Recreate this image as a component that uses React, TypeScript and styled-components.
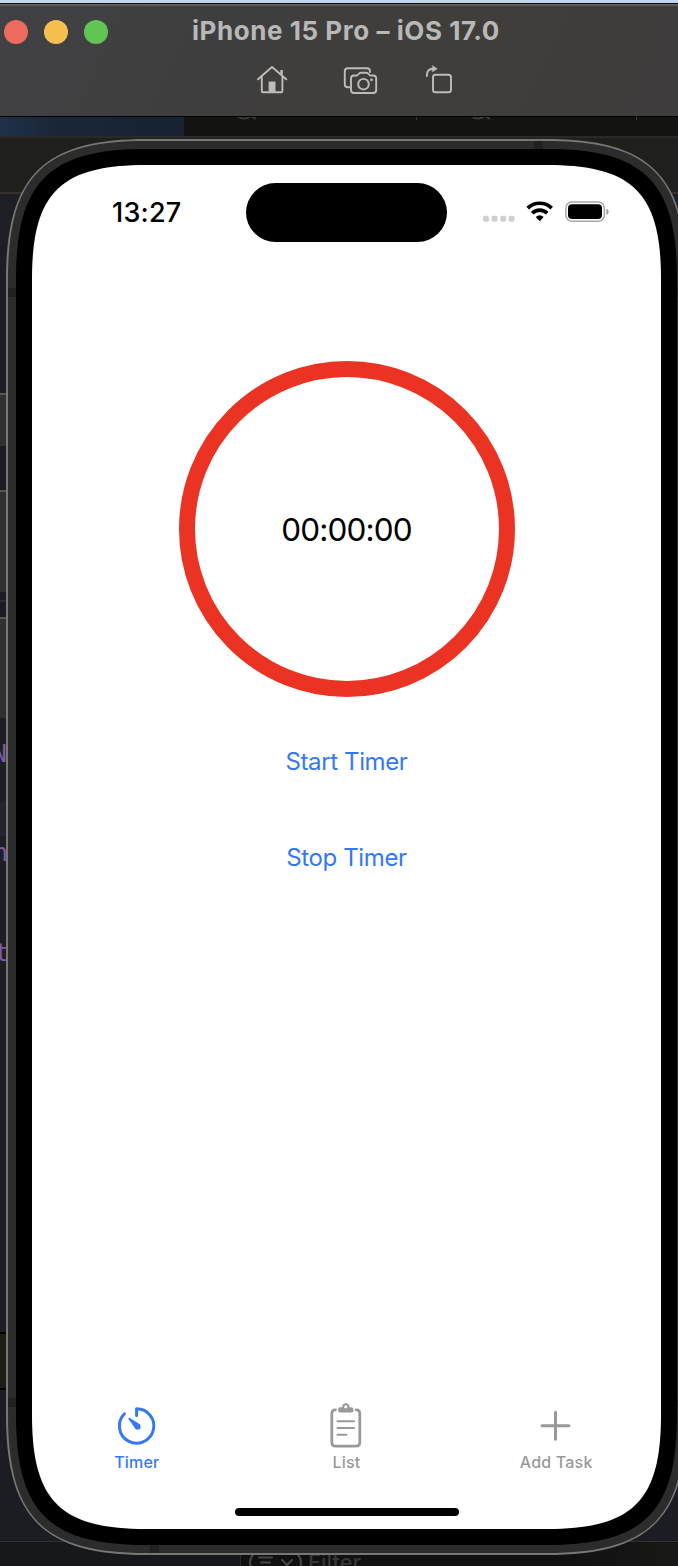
import React from 'react';
import styled, { createGlobalStyle } from 'styled-components';

const GlobalStyle = createGlobalStyle`
  * { box-sizing: border-box; }
  body { margin: 0; background: #1e1f25; }
`;

const font = `Inter, 'Liberation Sans', sans-serif`;

/* Smooth-cornered rectangle: each corner eases in over `l` px and cuts the diagonal at `m` px. */
const smooth = (w: number, h: number, l: number, m: number) => {
  const c = (8 * m - l) / 3;
  return `path('M${l} 0 L${w - l} 0 C${w - c} 0 ${w} ${c} ${w} ${l} L${w} ${h - l} C${w} ${h - c} ${w - c} ${h} ${w - l} ${h} L${l} ${h} C${c} ${h} 0 ${h - c} 0 ${h - l} L0 ${l} C0 ${c} ${c} 0 ${l} 0 Z')`;
};

const Page = styled.div`
  display: grid;
  grid-template: 1566px / 678px;
  width: 678px;
  height: 1566px;
  overflow: hidden;
  font-family: ${font};
  > * { grid-area: 1 / 1; }
`;

/* ---------- editor window behind the simulator ---------- */
const Editor = styled.div`
  display: flex;
  flex-direction: column;
  background: #1e1f25;
`;
const Band = styled.div<{ $h: number; $c: string }>`
  flex: none;
  height: ${p => p.$h}px;
  background: ${p => p.$c};
`;
const TabStrip = styled.div`
  display: flex;
  height: 19px;
  flex: none;
  background: #131311;
`;
const ActiveTab = styled.div`
  width: 184px;
  background: linear-gradient(90deg, #20304a, #1a2637 30%, #182230);
`;
const TabGlyphs = styled.svg`
  width: 494px;
  height: 19px;
`;
const Gutter = styled.div<{ $h: number; $c?: string }>`
  flex: none;
  height: ${p => p.$h}px;
  font-family: 'DejaVu Sans Mono', monospace;
  font-size: 24px;
  line-height: 34px;
  color: #7a5aa6;
  background: ${p => p.$c || '#1e1f25'};
`;
const CodeEdge = styled.div<{ $overhang?: number }>`
  width: ${p => 6 + (p.$overhang || 0)}px;
  height: 34px;
  display: flex;
  justify-content: flex-end;
`;
const Footer = styled.div`
  flex: 1;
  display: flex;
  background: #17181b;
`;
const FilterBar = styled.div`
  margin-left: 240px;
  flex: 1;
  padding: 8px 0 0 8px;
  display: flex;
  gap: 5px;
  color: #363636;
  font-size: 22px;
  font-weight: 500;
  line-height: 24px;
  border-left: 1px solid #292929;
  background: linear-gradient(90deg, #101010, #111 75%, #181817);
`;

/* ---------- simulator ---------- */
const Simulator = styled.div`
  display: flex;
  flex-direction: column;
  z-index: 1;
`;
const Desktop = styled.div`
  height: 4px;
  flex: none;
  background: #c3d6ea;
  border-bottom: 1px solid #101014;
`;
const TitleBar = styled.header`
  height: 113px;
  flex: none;
  border-top: 2px solid #5e5e5e;
  border-bottom: 1px solid #000;
  background: linear-gradient(115deg, #414144, #3f3e3e 35%, #403e3b 65%, #3e3c3c);
`;
const TitleRow = styled.div`
  display: grid;
  grid-template-columns: 192px 1fr;
  align-items: center;
  height: 52px;
`;
const Lights = styled.div`
  display: flex;
  gap: 16px;
  padding-left: 4px;
`;
const Light = styled.i<{ $c: string }>`
  width: 24px;
  height: 24px;
  border-radius: 50%;
  background: ${p => p.$c};
`;
const Title = styled.h1`
  margin: 0;
  padding-bottom: 3px;
  font-size: 26px;
  line-height: 32px;
  font-weight: 700;
  letter-spacing: 0.55px;
  color: #b9b8b8;
  white-space: nowrap;
`;
const Tools = styled.div`
  display: grid;
  grid-template-columns: 88px 80px 36px;
  padding: 4px 0 0 254px;
`;
const ToolIcon = styled.svg`
  width: 36px;
  height: 36px;
  fill: none;
  stroke: #bdbcba;
  stroke-width: 1.9;
  stroke-linejoin: round;
  stroke-linecap: round;
`;

const Highlight = styled.div`
  width: 681px;
  height: 1416px;
  flex: none;
  margin: 22px 0 0 6px;
  padding: 2px;
  background: #777;
  clip-path: ${smooth(681, 1416, 140, 31.5)};
`;
const Frame = styled.div`
  position: relative;
  width: 677px;
  height: 1412px;
  padding: 8px;
  background: #2c2c2c;
  clip-path: ${smooth(677, 1412, 138, 30.5)};
`;
const Antenna = styled.i<{ $x: number; $y: number }>`
  position: absolute;
  left: ${p => p.$x}px;
  top: ${p => p.$y}px;
  width: 9px;
  height: 9px;
  background: #212121;
`;
const Bezel = styled.div`
  width: 661px;
  height: 1396px;
  padding: 16px;
  background: #000;
  clip-path: ${smooth(661, 1396, 130, 28.6)};
`;
const Screen = styled.main`
  display: flex;
  flex-direction: column;
  align-items: center;
  width: 629px;
  height: 1364px;
  background: #fff;
  clip-path: ${smooth(629, 1364, 114, 24.8)};
`;
const StatusBar = styled.div`
  display: grid;
  grid-template-columns: 214px 201px 1fr;
  width: 100%;
  height: 78px;
  padding-top: 18px;
  flex: none;
`;
const Clock = styled.time`
  padding-left: 80px;
  font-size: 27px;
  font-weight: 550;
  letter-spacing: 0.2px;
  line-height: 59px;
  color: #000;
`;
const Island = styled.div`
  height: 59px;
  border-radius: 30px;
  background: #000;
`;
const StatusIcons = styled.svg`
  width: 132px;
  height: 32px;
  margin: 12px 0 0 33px;
`;
const Ring = styled.div`
  display: flex;
  align-items: center;
  justify-content: center;
  flex: none;
  width: 336px;
  height: 336px;
  margin-top: 118px;
  border: 16px solid #eb3323;
  border-radius: 50%;
  font-size: 31.5px;
  letter-spacing: -0.85px;
  color: #000;
`;
const Actions = styled.div`
  display: flex;
  flex-direction: column;
  align-items: center;
  gap: 64px;
  padding-top: 49px;
  flex: 1;
`;
const Action = styled.button`
  border: 0;
  padding: 0;
  background: none;
  color: #3478f6;
  font-family: inherit;
  font-size: 24px;
  line-height: 32px;
  letter-spacing: -0.38px;
  white-space: nowrap;
`;
const TabBar = styled.nav`
  display: grid;
  grid-template-columns: repeat(3, 1fr);
  width: 100%;
  height: 108px;
`;
const Tab = styled.div<{ $active?: boolean }>`
  display: flex;
  flex-direction: column;
  align-items: center;
  color: ${p => (p.$active ? '#3478f6' : '#999')};
  font-size: 16px;
  font-weight: 500;
  line-height: 21px;
  letter-spacing: 0.2px;
  white-space: nowrap;
`;
const TabIcon = styled.svg`
  width: 48px;
  height: 52px;
  fill: none;
  stroke: currentColor;
  stroke-width: 3;
  stroke-linecap: round;
  stroke-linejoin: round;
`;
const HomeIndicator = styled.div`
  width: 224px;
  height: 8px;
  margin-bottom: 13px;
  flex: none;
  border-radius: 4px;
  background: #000;
`;

export default function App() {
  return (
    <Page>
      <GlobalStyle />
      <Editor aria-hidden>
        <Band $h={117} $c="#1e1f25" />
        <TabStrip>
          <ActiveTab />
          <TabGlyphs viewBox="184 117 494 19" fill="none" stroke="#3b3b3a" strokeWidth="2">
            <path d="M237 116q7 5 14 0l5 3M471 116q7 5 14 0l5 3" />
            <path d="M416.5 117v3M636.5 117v3" strokeWidth="1" />
          </TabGlyphs>
        </TabStrip>
        <Band $h={2} $c="#2a2927" />
        <Band $h={54} $c="#1f1f1c" />
        <Band $h={2} $c="#373231" />
        <Band $h={199} $c="#1e1f25" />
        <Band $h={2} $c="#565656" />
        <Band $h={51} $c="#303030" />
        <Band $h={44} $c="#1b1c22" />
        <Band $h={2} $c="#565656" />
        <Band $h={100} $c="#303030" />
        <Band $h={8} $c="#1b1c22" />
        <Band $h={2} $c="#2d2d31" />
        <Band $h={15} $c="#1b1c22" />
        <Band $h={2} $c="#565656" />
        <Band $h={99} $c="#303030" />
        <Gutter $h={19} />
        <Gutter $h={65}><CodeEdge $overhang={1}>N</CodeEdge></Gutter>
        <Gutter $h={34} $c="#23252b" />
        <Gutter $h={100}><CodeEdge $overhang={2}>n</CodeEdge></Gutter>
        <Gutter $h={396}><CodeEdge $overhang={3}>t</CodeEdge></Gutter>
        <Band $h={2} $c="#000" />
        <Band $h={54} $c="#1d1d1a" />
        <Band $h={2} $c="#000" />
        <Band $h={151} $c="#1c1d22" />
        <Band $h={1} $c="#303030" />
        <Footer>
          <FilterBar>
            <svg width="54" height="24" viewBox="0 0 54 24" fill="none" stroke="#464646" strokeWidth="2" strokeLinecap="round">
              <rect x="1" y="1" width="51" height="23" rx="11.5" />
              <path d="M10 7.500h13M12 12.500h9M33 10l5 5 5-5" />
            </svg>
            Filter
          </FilterBar>
        </Footer>
      </Editor>

      <Simulator>
        <Desktop />
        <TitleBar>
          <TitleRow>
            <Lights>
              <Light $c="#ed6a5e" />
              <Light $c="#f5bf4f" />
              <Light $c="#61c554" />
            </Lights>
            <Title>iPhone 15 Pro – iOS 17.0</Title>
          </TitleRow>
          <Tools>
            <ToolIcon viewBox="254 62 36 36">
              <path d="M258 79.300 272 67l14.300 12.300M261.800 76.800v13.900q0 1.600 1.600 1.600h17.400q1.600 0 1.600-1.600V76.800" />
              <path d="M281.600 74.500v-4.500" strokeWidth="2.600" strokeLinecap="butt" />
              <path d="M268.600 81.500h6.900v10.500h-6.900z" fill="#bdbcba" stroke="none" />
            </ToolIcon>
            <ToolIcon viewBox="342 62 36 36">
              <path d="M350 87.300h-2.200q-3 0-3-3V71.200q0-3 3-3H367q3 0 3 3v.8" />
              <path d="M354 75.500h2.800c1.400 0 2-2.700 3.800-2.700h6c1.800 0 2.400 2.700 3.800 2.700h2.800q3 0 3 3V90q0 3-3 3H354q-3 0-3-3V78.500q0-3 3-3Z" />
              <circle cx="363.500" cy="84.200" r="5.300" />
              <circle cx="371.500" cy="79.800" r="1.400" fill="#bdbcba" stroke="none" />
            </ToolIcon>
            <ToolIcon viewBox="422 62 36 36">
              <rect x="433" y="74.700" width="18" height="17.600" rx="2.600" />
              <path d="M426.800 76c0-4.700 2.400-7.200 6.300-7.200" />
              <path d="m432.600 65.800 4.600 3-4.600 3z" fill="#bdbcba" strokeWidth="0.600" />
            </ToolIcon>
          </Tools>
        </TitleBar>

        <Highlight>
          <Frame>
            <Antenna $x={0} $y={147} />
            <Antenna $x={0} $y={1257} />
            <Antenna $x={668} $y={147} />
            <Antenna $x={668} $y={1257} />
            <Antenna $x={526} $y={0} />
            <Antenna $x={142} $y={1404} />
            <Bezel>
              <Screen>
                <StatusBar>
                  <Clock>13:27</Clock>
                  <Island />
                  <StatusIcons viewBox="480 195 132 32">
                    <g fill="#cfcfcf">
                      <rect x="483" y="215.700" width="6" height="6" rx="2" />
                      <rect x="491.600" y="215.700" width="6" height="6" rx="2" />
                      <rect x="500.200" y="215.700" width="6" height="6" rx="2" />
                      <rect x="508.600" y="215.700" width="6" height="6" rx="2" />
                    </g>
                    <g fill="none" stroke="#000" strokeWidth="3.700">
                      <path d="M527.700 208.100a17.300 17.300 0 0 1 24 0" />
                      <path d="M532.200 213.200a10.700 10.700 0 0 1 15 0" />
                    </g>
                    <path d="m539.700 221.300-4-4.200q4-3.500 8 0Z" />
                    <rect x="565.900" y="201.900" width="38.400" height="19.400" rx="6" fill="none" stroke="#a6a6a6" strokeWidth="1.500" />
                    <rect x="568" y="204.300" width="34" height="14.600" rx="4" />
                    <path d="M606.300 208.500q2.400.8 2.400 3.200t-2.400 3.200Z" fill="#a0a0a0" />
                  </StatusIcons>
                </StatusBar>
                <Ring>00:00:00</Ring>
                <Actions>
                  <Action>Start Timer</Action>
                  <Action>Stop Timer</Action>
                </Actions>
                <TabBar>
                  <Tab $active>
                    <TabIcon viewBox="112.800 1400 48 52">
                      <path d="M136.400 1415.500v-6.700a17.200 17.200 0 1 1-12.100 5" />
                      <path d="m128.900 1418.500 10.300 6.500-3 3.800Z" fill="currentColor" strokeWidth="1.500" />
                      <circle cx="137.700" cy="1426.900" r="2.700" fill="currentColor" stroke="none" />
                    </TabIcon>
                    Timer
                  </Tab>
                  <Tab>
                    <TabIcon viewBox="322.500 1400 48 52">
                      <path d="M336 1409.800q-3.700 0-3.700 3.700v29q0 3.700 3.700 3.700h20.600q3.700 0 3.700-3.700v-29q0-3.700-3.700-3.700" strokeWidth="2.700" />
                      <path d="M338 1421.300h16.500M338 1428h16.500M338 1434.700h8.800" strokeWidth="2" />
                      <path d="M340.700 1407.200h11.200q2 0 2 2v1.300q0 2-2 2h-11.200q-2 0-2-2v-1.300q0-2 2-2Z" fill="currentColor" stroke="none" />
                      <circle cx="346.300" cy="1406.800" r="2.600" fill="#fff" strokeWidth="2" />
                    </TabIcon>
                    List
                  </Tab>
                  <Tab>
                    <TabIcon viewBox="532 1400 48 52">
                      <path d="M555.500 1412.300v27M542 1425.800h27" />
                    </TabIcon>
                    Add Task
                  </Tab>
                </TabBar>
                <HomeIndicator />
              </Screen>
            </Bezel>
          </Frame>
        </Highlight>
      </Simulator>
    </Page>
  );
}
